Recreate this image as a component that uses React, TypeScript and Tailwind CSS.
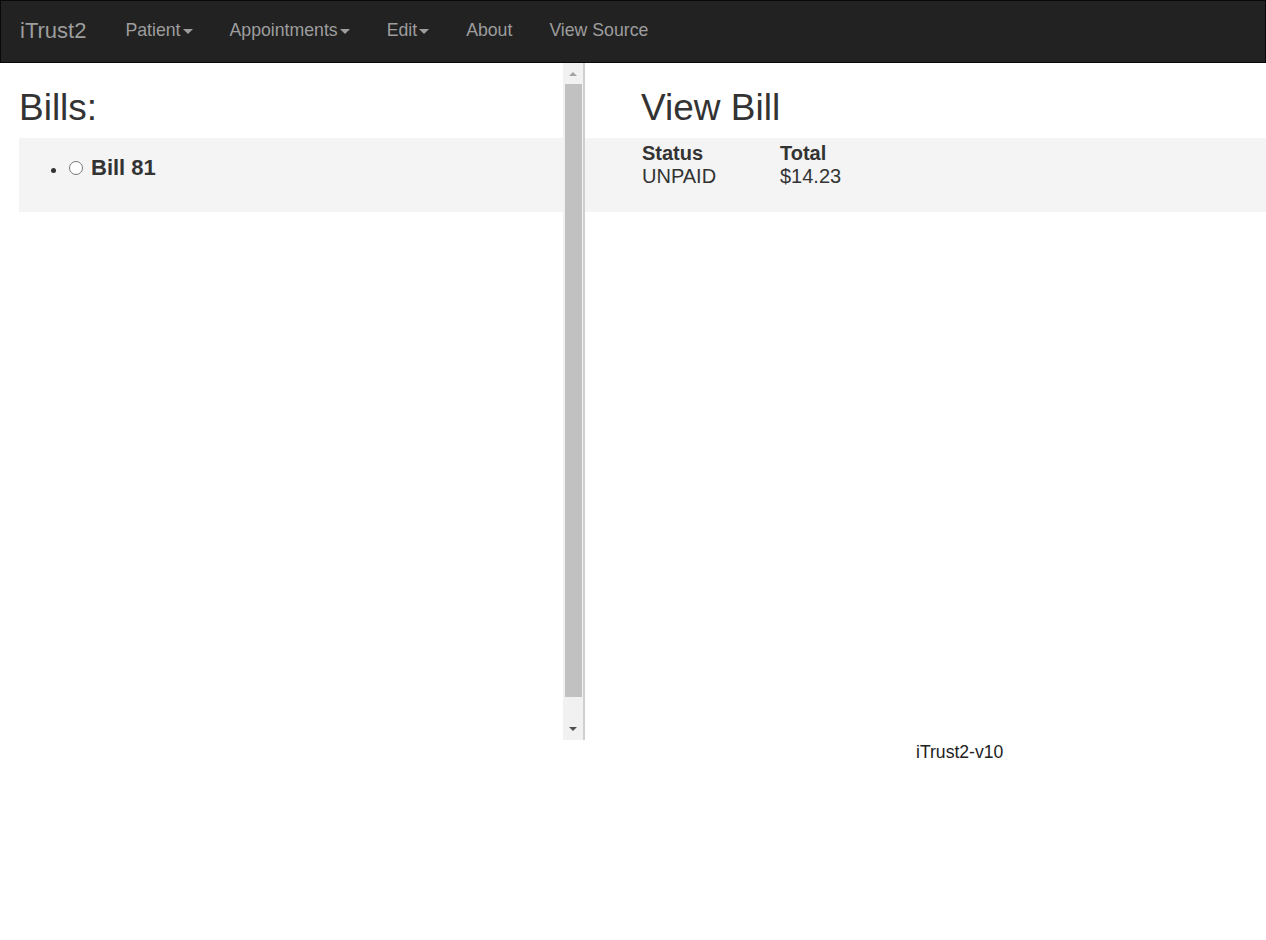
import React from "react";

const Caret = () => (
  <span className="inline-block ml-[2px] align-middle w-0 h-0 border-l-[5px] border-r-[5px] border-t-[5px] border-l-transparent border-r-transparent border-t-[#9d9d9d]" />
);

export default function App() {
  return (
    <div className="w-[1266px] h-[940px] bg-white text-[#333] font-['Liberation_Sans',Arial,sans-serif]">
      <nav className="h-[63px] bg-[#222] border border-[#080808] flex items-center pb-[1px]">
        <span className="ml-[19px] text-[22px] text-[#9d9d9d] leading-none">iTrust2</span>
        <div className="flex items-center ml-[39px] gap-[37px] text-[17.7px] text-[#9d9d9d] leading-none">
          <span>Patient<Caret /></span>
          <span>Appointments<Caret /></span>
          <span>Edit<Caret /></span>
          <span>About</span>
          <span>View Source</span>
        </div>
      </nav>
      <div className="flex h-[677px]">
        <div className="w-[563px] pl-[19px] flex flex-col">
          <h1 className="text-[37px] leading-none pt-[26px] h-[75px]">Bills:</h1>
          <div className="bg-[#f4f4f4] h-[74px] pl-[32px] pt-[19px]">
            <div className="flex items-center">
              <span className="w-[5px] h-[5px] rounded-full bg-[#333] mr-[13px] mt-[4px]" />
              <span className="w-[14px] h-[14px] rounded-full border border-[#767676] bg-white mr-[8px]" />
              <span className="font-bold text-[22px] leading-none">Bill 81</span>
            </div>
          </div>
        </div>
        <div className="w-[20px] bg-[#f1f1f1] flex flex-col items-center">
          <div className="h-[21px] flex items-center justify-center">
            <span className="w-0 h-0 border-l-[4px] border-r-[4px] border-b-[4px] border-l-transparent border-r-transparent border-b-[#a3a3a3]" />
          </div>
          <div className="flex-1 w-[17px] bg-[#c1c1c1] ml-[1px]" />
          <div className="h-[43px] flex items-end justify-center pb-[9px]">
            <span className="w-0 h-0 border-l-[4px] border-r-[4px] border-t-[4px] border-l-transparent border-r-transparent border-t-[#505050]" />
          </div>
        </div>
        <div className="w-[2px] bg-[#cfcfcf]" />
        <div className="flex-1 flex flex-col">
          <h1 className="text-[37px] leading-none pt-[26px] h-[75px] pl-[56px]">View Bill</h1>
          <div className="bg-[#f4f4f4] h-[74px] pl-[57px] pt-[4px] flex gap-[39px] text-[20px] leading-[23px]">
            <div className="flex flex-col w-[99px]">
              <span className="font-bold">Status</span>
              <span>UNPAID</span>
            </div>
            <div className="flex flex-col">
              <span className="font-bold">Total</span>
              <span>$14.23</span>
            </div>
          </div>
        </div>
      </div>
      <div className="flex">
        <span className="ml-[916px] mt-[2px] text-[17.6px] leading-[20px] text-[#222]">iTrust2-v10</span>
      </div>
    </div>
  );
}
